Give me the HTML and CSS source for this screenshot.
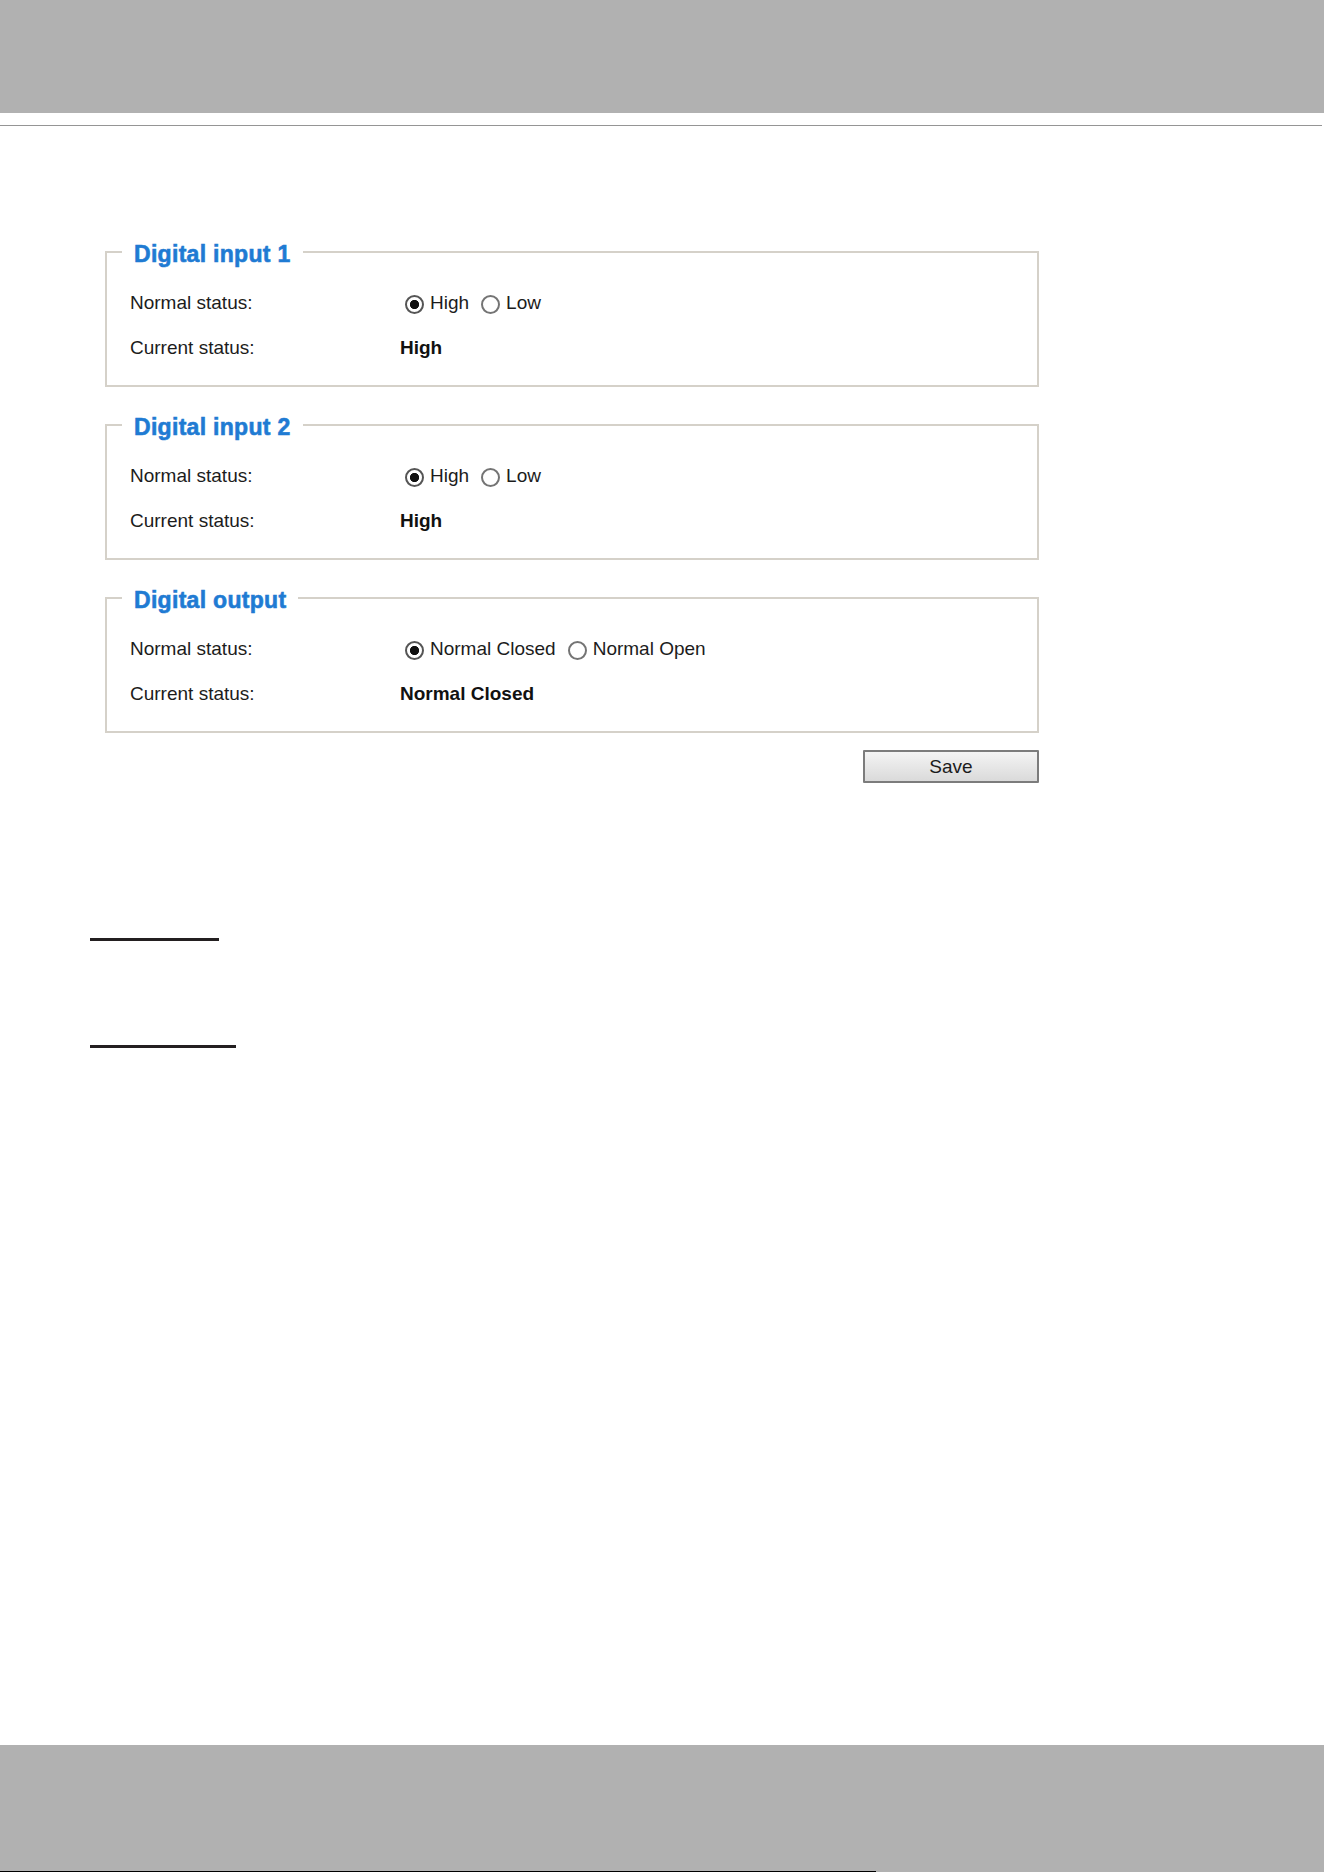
FILE: index.html
```html
<!DOCTYPE html>
<html lang="en">
<head>
<meta charset="utf-8">
<title>Digital input / output</title>
<link rel="stylesheet" href="styles.css">
</head>
<body>
<div class="page">
  <div class="header"></div>
  <div class="rule"></div>

  <main class="main">
    <fieldset class="box">
      <legend>Digital input 1</legend>
      <div class="row">
        <span class="label">Normal status:</span>
        <span class="value">
          <label class="opt"><input class="radio" type="radio" name="di1" checked>High</label>
          <label class="opt"><input class="radio" type="radio" name="di1">Low</label>
        </span>
      </div>
      <div class="row">
        <span class="label">Current status:</span>
        <span class="value strong">High</span>
      </div>
    </fieldset>

    <fieldset class="box">
      <legend>Digital input 2</legend>
      <div class="row">
        <span class="label">Normal status:</span>
        <span class="value">
          <label class="opt"><input class="radio" type="radio" name="di2" checked>High</label>
          <label class="opt"><input class="radio" type="radio" name="di2">Low</label>
        </span>
      </div>
      <div class="row">
        <span class="label">Current status:</span>
        <span class="value strong">High</span>
      </div>
    </fieldset>

    <fieldset class="box">
      <legend>Digital output</legend>
      <div class="row">
        <span class="label">Normal status:</span>
        <span class="value">
          <label class="opt"><input class="radio" type="radio" name="do" checked>Normal Closed</label>
          <label class="opt"><input class="radio" type="radio" name="do">Normal Open</label>
        </span>
      </div>
      <div class="row">
        <span class="label">Current status:</span>
        <span class="value strong">Normal Closed</span>
      </div>
    </fieldset>

    <div class="actions">
      <button class="save" type="button">Save</button>
    </div>
  </main>

  <div class="marks">
    <div class="mark mark-a"></div>
    <div class="mark mark-b"></div>
  </div>

  <div class="footer">
    <div class="footer-edge"></div>
  </div>
</div>
</body>
</html>
```
FILE: styles.css
```css
html, body {
  margin: 0;
  padding: 0;
  background: #ffffff;
}

body {
  font-family: "Liberation Sans", Arial, sans-serif;
  color: #1c1c1c;
}

.page {
  width: 1324px;
  height: 1872px;
  display: flex;
  flex-direction: column;
  overflow: hidden;
}

.header {
  height: 113px;
  background: #b1b1b1;
  flex: none;
}

.rule {
  margin-top: 12px;
  width: 1322px;
  height: 1px;
  background: #959595;
  flex: none;
}

.main {
  margin-top: 111px;
  padding-left: 105px;
  width: 934px;
  display: flex;
  flex-direction: column;
  gap: 23px;
}

.box {
  box-sizing: border-box;
  width: 934px;
  margin: 0;
  padding: 25px 0 26px 15px;
  border: 2px solid #d5d1c9;
  min-width: 0;
}

.box legend {
  padding: 4px 12px 0;
  font-size: 23px;
  line-height: 26px;
  font-weight: bold;
  color: #1f7bd3;
  letter-spacing: 0.3px;
  -webkit-text-stroke: 0.6px #1f7bd3;
}

.row {
  display: flex;
  align-items: center;
  height: 22px;
  padding-left: 8px;
  font-size: 19px;
  line-height: 22px;
}

.row + .row {
  margin-top: 23px;
}

.label {
  width: 270px;
  flex: none;
}

.value {
  display: flex;
  align-items: center;
  gap: 7px;
}

.strong {
  font-weight: bold;
  color: #111;
}

.opt {
  display: flex;
  align-items: center;
}

.radio {
  -webkit-appearance: none;
  appearance: none;
  box-sizing: border-box;
  width: 19px;
  height: 19px;
  margin: 3px 6px 0 5px;
  border: 2px solid #747474;
  border-radius: 50%;
  background: #ffffff;
  flex: none;
}

.radio:checked {
  border-color: #555555;
  background: radial-gradient(circle, #111111 0 4.3px, #ffffff 4.9px);
}

.actions {
  display: flex;
  justify-content: flex-end;
  margin-top: -6px;
}

.save {
  box-sizing: border-box;
  width: 176px;
  height: 33px;
  margin: 0;
  padding: 0;
  border: 2px solid #7c7c7c;
  border-radius: 1px;
  background: linear-gradient(#f4f4f4, #dadada);
  font-family: "Liberation Sans", Arial, sans-serif;
  font-size: 19px;
  color: #1c1c1c;
}

.marks {
  padding-left: 90px;
  margin-top: 155px;
  display: flex;
  flex-direction: column;
}

.mark {
  height: 3px;
  background: #231f20;
}

.mark-a {
  width: 129px;
}

.mark-b {
  width: 146px;
  margin-top: 104px;
}

.footer {
  margin-top: auto;
  height: 127px;
  background: #b1b1b1;
  display: flex;
  flex-direction: column;
  justify-content: flex-end;
  flex: none;
}

.footer-edge {
  width: 876px;
  height: 1px;
  background: #000000;
}
```
